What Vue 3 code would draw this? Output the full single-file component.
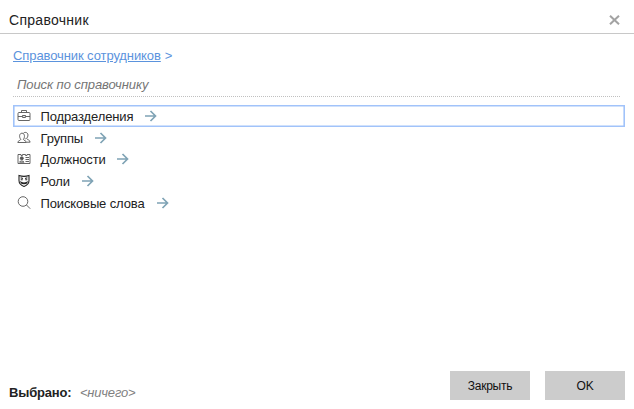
<script setup>
const items = [
  { icon: 'case', label: 'Подразделения', width: 93 },
  { icon: 'group', label: 'Группы', width: 43 },
  { icon: 'card', label: 'Должности', width: 65 },
  { icon: 'mask', label: 'Роли', width: 30 },
  { icon: 'find', label: 'Поисковые слова', width: 105 },
]
</script>

<template>
  <div class="dialog">
    <header class="head">
      <span class="title">Справочник</span>
      <svg class="close" width="11" height="10" viewBox="0 0 11 10"><path d="M1 .7 10 9.3M10 .7 1 9.3" /></svg>
    </header>
    <main class="body">
      <nav class="crumbs"><a class="link">Справочник сотрудников</a><span class="sep">&gt;</span></nav>
      <div class="search">Поиск по справочнику</div>
      <ul class="list">
        <li v-for="(item, i) in items" :key="item.icon" class="row" :class="{ active: i === 0 }">
          <svg class="icon" :class="item.icon" width="14" height="14" viewBox="0 0 14 14">
            <template v-if="item.icon === 'case'">
              <rect x="1" y="3.5" width="12" height="8" rx="1" />
              <path d="M4.5 3.5V1.5h5v2M1 7.5h4.5M8.5 7.5H13" />
              <rect x="5.7" y="6.5" width="2.6" height="2" />
            </template>
            <template v-else-if="item.icon === 'group'">
              <path d="M.8 11.5c0-2 2.8-1.8 3-3.2C1.8 6 2.3 2.2 5 2.2S8.2 6 6.4 8.3c.2 1.3 3 1.3 3 3.2zM6.3 2.4C7 .9 10.8.8 11 4c0 1.5-.6 2.6-1.4 3.4.2 1.3 3.4 1.2 3.5 3.8H9.6M7.7 7.3l1 .6" />
            </template>
            <template v-else-if="item.icon === 'card'">
              <path d="M1 2.5h3v1h1.5v-1h3v1H10v-1h3v9H1zM8.5 5.5H12M8.5 7.5H12M8.5 9.5H12M2.5 10.2c0-1.6 4.5-1.6 4.5 0z" />
              <circle class="solid" cx="4.8" cy="6.3" r="1.5" />
            </template>
            <template v-else-if="item.icon === 'mask'">
              <path d="M2 1.5c3 1 7 1 10 0v5c0 3-2.5 5-5 6-2.5-1-5-3-5-6zM3.6 3.7l2.3.9M10.4 3.7l-2.3.9M3.7 5.7h2M8.3 5.7h2M4 8.2c2 1.2 4 1.2 6 0-.7 2-5.3 2-6 0z" />
            </template>
            <template v-else>
              <circle cx="6" cy="5.5" r="4.8" /><path d="m9.5 9 3.7 3.7" />
            </template>
          </svg>
          <span class="label" :style="{ width: item.width + 'px' }">{{ item.label }}</span>
          <svg class="arrow" width="12" height="12" viewBox="0 0 12 12"><path d="M0 6h10.5M5.5 1l5 5-5 5" /></svg>
        </li>
      </ul>
    </main>
    <footer class="foot">
      <div class="picked"><b>Выбрано:</b><i>&lt;ничего&gt;</i></div>
      <button class="btn">Закрыть</button>
      <button class="btn">OK</button>
    </footer>
  </div>
</template>

<style>
body { background: #fff; overflow: hidden; }
</style>

<style scoped>
.dialog {
  width: 634px;
  height: 409px;
  display: flex;
  flex-direction: column;
  font-family: "Liberation Sans", Arial, sans-serif;
  font-size: 13px;
  letter-spacing: -.09px;
  color: #222;
}
.head {
  box-sizing: border-box;
  height: 34px;
  display: flex;
  align-items: center;
  justify-content: space-between;
  padding: 7px 14px 0 9px;
  border-bottom: 1px solid #c8c8c8;
}
.title { font-size: 14px; line-height: 16px; letter-spacing: .28px; }
.close { fill: none; stroke: #a3a3a3; stroke-width: 2; }
.body { flex: 1; padding: 14px 9px 0 13px; }
.crumbs { height: 16px; line-height: 16px; color: #5b93dd; white-space: nowrap; }
.link { text-decoration: underline; }
.sep { margin-left: 4px; }
.search {
  box-sizing: border-box;
  height: 33px;
  margin-right: 5px;
  padding: 13px 0 0 4px;
  line-height: 16px;
  font-style: italic;
  color: #757575;
  border-bottom: 1px dotted #c0c0c0;
}
.list { list-style: none; margin: 8px 0 0; padding: 0; }
.row {
  box-sizing: border-box;
  height: 21.7px;
  display: flex;
  align-items: center;
  padding-left: 4px;
}
.row.active { box-shadow: inset 0 0 0 1.6px #a1c3fa; }
.icon { fill: none; stroke: #555; stroke-width: .9; margin-right: 9.5px; }
.mask { stroke: #222; stroke-width: 1.1; }
.solid { fill: #555; }
.label { white-space: nowrap; line-height: 16px; padding-top: 2px; letter-spacing: -.13px; }
.arrow { margin-left: 11.5px; fill: none; stroke: #7fa3b5; stroke-width: 1.7; }
.foot { height: 38px; display: flex; align-items: flex-start; padding: 0 9px; }
.picked { flex: 1; padding-top: 14px; line-height: 16px; }
.picked b { letter-spacing: -.17px; }
.picked i { margin-left: 8.5px; letter-spacing: -.2px; color: #808080; }
.btn {
  width: 80px;
  height: 29px;
  margin: 0 0 0 15px;
  padding: 0;
  border: 0;
  background: #ccc;
  font: 12px "Liberation Sans", Arial, sans-serif;
  letter-spacing: -.25px;
  color: #111;
}
</style>
